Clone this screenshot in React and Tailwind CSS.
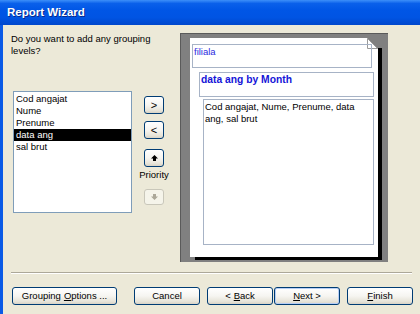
import React from "react";

const btn =
  "h-[18px] flex items-center justify-center rounded-[3px] border border-[#003c74] bg-[linear-gradient(to_bottom,#ffffff_0%,#f6f5f1_50%,#e6e3d8_85%,#d8d3c6_100%)] text-black";

function UpArrow({ color = "#000" }) {
  return (
    <svg width="7" height="6" viewBox="0 0 7 6">
      <polygon points="3.5,0 7,3.5 5,3.5 5,6 2,6 2,3.5 0,3.5" fill={color} />
    </svg>
  );
}
function DownArrow({ color = "#aca899" }) {
  return (
    <svg width="7" height="6" viewBox="0 0 7 6">
      <polygon points="2,0 5,0 5,2.5 7,2.5 3.5,6 0,2.5 2,2.5" fill={color} />
    </svg>
  );
}

export default function App() {
  const items = ["Cod angajat", "Nume", "Prenume", "data ang", "sal brut"];
  return (
    <div className="w-[420px] h-[314px] overflow-hidden bg-[#ECE9D8] flex flex-col font-['Liberation_Sans',Arial,sans-serif] text-[9.5px] text-black">
      {/* Title bar */}
      <div className="h-[25px] shrink-0 flex items-center pl-[7px] pt-[1px] bg-[linear-gradient(to_bottom,#3d8ff9_0%,#0a60ea_14%,#0056e6_40%,#0054e3_70%,#0047cc_100%)]">
        <span className="text-white font-bold text-[11.5px] [text-shadow:1px_1px_0_#0a2a8c]">
          Report Wizard
        </span>
      </div>

      {/* Body */}
      <div className="flex-1 border-l-[3px] border-[#0a5ae6] flex flex-col">
        <div className="flex h-[237px]">
          {/* Left column */}
          <div className="w-[166px] pl-[8px] pt-[8px] flex flex-col">
            <p className="leading-[12px] w-[150px]">
              Do you want to add any grouping levels?
            </p>
            <div className="flex mt-[34px]">
              <div className="ml-[2px] w-[119px] h-[122px] border border-[#7f9db9] bg-white pt-[1px] flex flex-col">
                {items.map((it) => (
                  <div
                    key={it}
                    className={
                      "h-[12px] leading-[12px] pl-[2px] " +
                      (it === "data ang" ? "bg-black text-white" : "")
                    }
                  >
                    {it}
                  </div>
                ))}
              </div>
              <div className="ml-[11px] w-[22px] flex flex-col items-center">
                <div className={btn + " w-[20px] h-[17px] mt-[5px] text-[11px]"}>&gt;</div>
                <div className={btn + " w-[20px] h-[17px] mt-[7px] text-[11px]"}>&lt;</div>
                <div className={btn + " w-[20px] h-[16px] mt-[10px]"}>
                  <UpArrow />
                </div>
                <div className="mt-[2px] w-[40px] text-center leading-[12px]">Priority</div>
                <div className="mt-[8px] w-[20px] h-[16px] flex items-center justify-center rounded-[3px] border border-[#c9c7ba] bg-[#f5f4ea]">
                  <DownArrow />
                </div>
              </div>
            </div>
          </div>

          {/* Preview */}
          <div className="mt-[8px] ml-[11px] w-[208px] h-[229px] bg-[#808080] border-l border-t border-[#5a5a5a] pl-[9px] pt-[4px] pr-[6px] pb-[2px] flex flex-col">
            <div className="flex">
              <div className="relative w-[188px] h-[219px] bg-white">
                <svg
                  className="absolute right-0 top-0"
                  width="11"
                  height="11"
                  viewBox="0 0 11 11"
                >
                  <polygon points="0,0 11,0 11,11" fill="#808080" />
                  <polygon points="0.5,0.5 0.5,10.5 10.5,10.5" fill="#ffffff" stroke="#9a9a9a" strokeWidth="1" />
                </svg>
                <div className="absolute left-[2px] top-[6px] w-[180px] h-[24px] border border-[#a7b3c6] pl-[1px] leading-[13px] text-[#2a2ae0]">
                  filiala
                </div>
                <div className="absolute left-[9px] top-[34px] w-[175px] h-[25px] border border-[#a7b3c6] pl-[1px] leading-[13px] text-[#1515d8] font-bold text-[10.3px]">
                  data ang by Month
                </div>
                <div className="absolute left-[13px] top-[61px] w-[171px] h-[146px] border border-[#a7b3c6] pl-[1px] pt-[1px] leading-[12px]">
                  Cod angajat, Nume, Prenume, data ang, sal brut
                </div>
              </div>
              <div className="w-[4px] mt-[10px] bg-black" />
            </div>
            <div className="h-[3px] ml-[5px] w-[187px] bg-black" />
          </div>
        </div>

        {/* Separator */}
        <div className="ml-[8px] w-[401px] mt-[10px] h-[2px] border-t border-[#aca899] border-b border-b-white" />

        {/* Buttons */}
        <div className="flex mt-[13px] ml-[9px]">
          <div className={btn + " w-[105px]"}>
            Grouping <span className="underline ml-[3px]">O</span>ptions ...
          </div>
          <div className={btn + " w-[66px] ml-[17px]"}>Cancel</div>
          <div className={btn + " w-[66px] ml-[7px]"}>
            &lt; <span className="underline ml-[3px]">B</span>ack
          </div>
          <div className={btn + " w-[66px] ml-[1px] shadow-[inset_0_0_0_1px_#b7cef5]"}>
            <span className="underline">N</span>ext &gt;
          </div>
          <div className={btn + " w-[66px] ml-[7px]"}>
            <span className="underline">F</span>inish
          </div>
        </div>
      </div>
    </div>
  );
}
